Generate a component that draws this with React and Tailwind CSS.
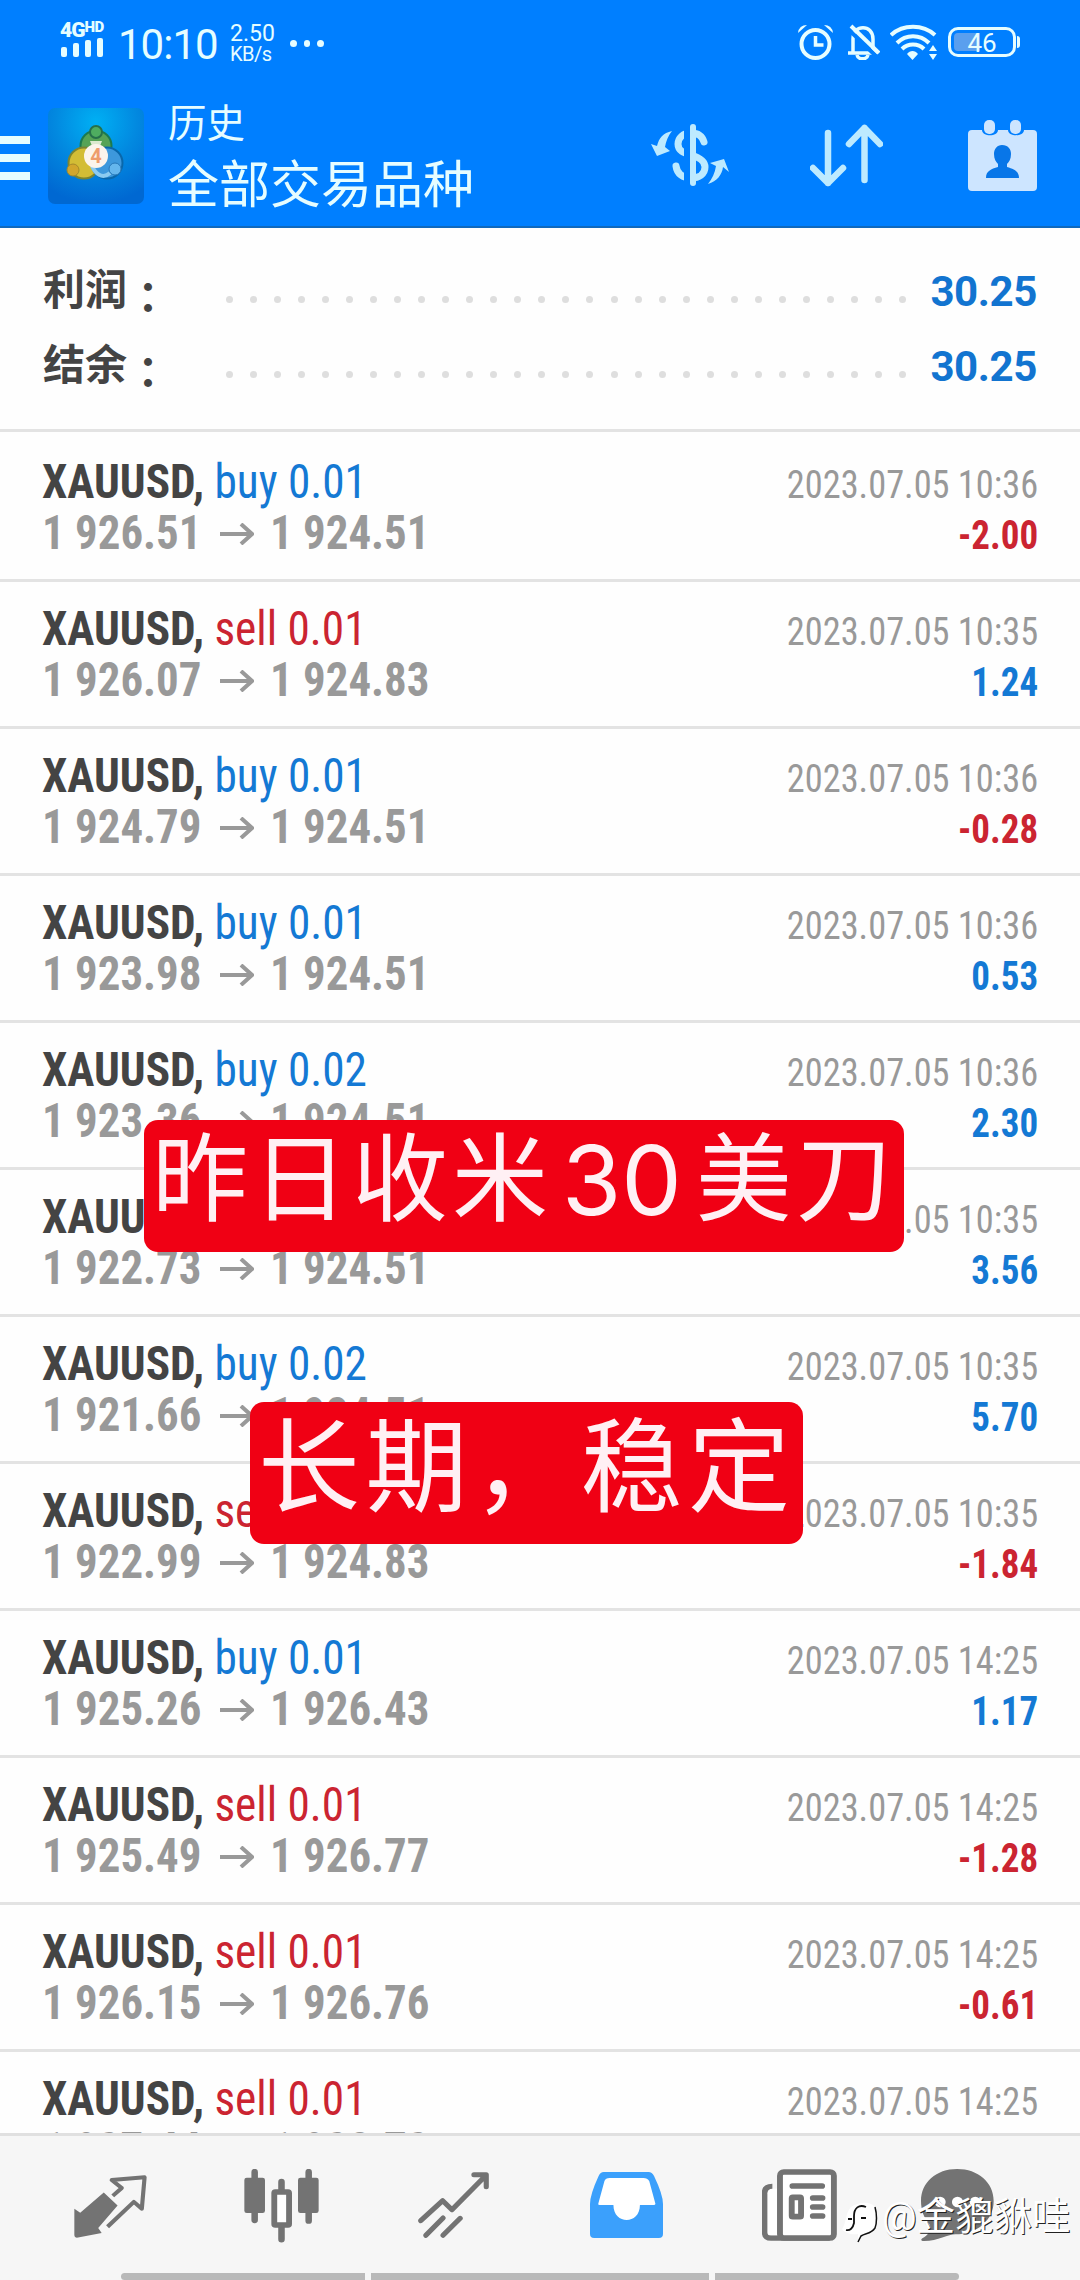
const trades = [
  { side: 'buy', lots: '0.01', open: '1 926.51', close: '1 924.51', time: '2023.07.05 10:36', profit: '-2.00' },
  { side: 'sell', lots: '0.01', open: '1 926.07', close: '1 924.83', time: '2023.07.05 10:35', profit: '1.24' },
  { side: 'buy', lots: '0.01', open: '1 924.79', close: '1 924.51', time: '2023.07.05 10:36', profit: '-0.28' },
  { side: 'buy', lots: '0.01', open: '1 923.98', close: '1 924.51', time: '2023.07.05 10:36', profit: '0.53' },
  { side: 'buy', lots: '0.02', open: '1 923.36', close: '1 924.51', time: '2023.07.05 10:36', profit: '2.30' },
  { side: 'buy', lots: '0.02', open: '1 922.73', close: '1 924.51', time: '2023.07.05 10:35', profit: '3.56' },
  { side: 'buy', lots: '0.02', open: '1 921.66', close: '1 924.51', time: '2023.07.05 10:35', profit: '5.70' },
  { side: 'sell', lots: '0.02', open: '1 922.99', close: '1 924.83', time: '2023.07.05 10:35', profit: '-1.84' },
  { side: 'buy', lots: '0.01', open: '1 925.26', close: '1 926.43', time: '2023.07.05 14:25', profit: '1.17' },
  { side: 'sell', lots: '0.01', open: '1 925.49', close: '1 926.77', time: '2023.07.05 14:25', profit: '-1.28' },
  { side: 'sell', lots: '0.01', open: '1 926.15', close: '1 926.76', time: '2023.07.05 14:25', profit: '-0.61' },
  { side: 'sell', lots: '0.01', open: '1 927.44', close: '1 928.72', time: '2023.07.05 14:25', profit: '-1.28' },
];

function StatusBar() {
  return (
    <div className="flex h-[86px] justify-between pl-[60px] pr-[60px] text-[#e6fdff]">
      <div className="flex">
        <div className="w-[46px] pt-[20px]">
          <div className="flex h-[18px] items-start font-black leading-none">
            <span className="text-[21px] leading-[20px] tracking-[-1px]">4G</span>
            <span className="text-[15px] leading-[14px] tracking-[-0.5px]">HD</span>
          </div>
          <div className="flex h-[19px] items-end gap-[6px] pl-px">
            <i className="h-[10px] w-[6px] rounded-[2px] bg-current" />
            <i className="h-[14px] w-[6px] rounded-[2px] bg-current" />
            <i className="h-[17px] w-[6px] rounded-[2px] bg-current" />
            <i className="h-[19px] w-[6px] rounded-[2px] bg-current" />
          </div>
        </div>
        <span className="ml-[12px] mt-[24px] w-[112px] text-[42px] leading-[42px] tracking-[-1px]">10:10</span>
        <div className="w-[59px] pt-[24px] text-[23px] leading-[20px]">
          <div>2.50</div>
          <div className="text-[20px] tracking-[-0.5px]">KB/s</div>
        </div>
        <div className="flex gap-[7px] pl-px pt-[40px]">
          <i className="size-[6.5px] rounded-full bg-current" />
          <i className="size-[6.5px] rounded-full bg-current" />
          <i className="size-[6.5px] rounded-full bg-current" />
        </div>
      </div>
      <div className="flex pt-[24px]">
        <svg width="36" height="36" viewBox="0 0 36 36" fill="none" stroke="currentColor" strokeWidth="4">
          <circle cx="17.500" cy="20" r="14" />
          <path d="M17.500 12v9h8" strokeWidth="3.500" />
          <path d="M0 9q1-8 9-8zM35 9q-1-8-9-8z" fill="currentColor" stroke="none" />
        </svg>
        <svg className="ml-[14px]" width="32" height="36" viewBox="0 0 32 36" fill="none" stroke="currentColor" strokeWidth="3.500">
          <path d="M5 29V15C5 0 25 0 25 15v14M0 29h29" />
          <path d="M9 31c1 5 10 5 11 0" />
          <path d="M1 1l30 29" stroke="#007fff" strokeWidth="4" transform="translate(-2 3)" />
          <path d="M3 2l28 27" strokeWidth="4" />
        </svg>
        <svg className="ml-[10px]" width="47" height="36" viewBox="0 0 47 36" fill="none" stroke="currentColor" strokeWidth="4">
          <path d="M1 11c12-11 32-11 44 0M7 19c9-9 23-9 32 0M12 25c6-6 16-6 22 0" />
          <path d="M17 30c3-4 8-4 11 0l-5.500 6z" fill="currentColor" stroke="none" />
          <path d="M43 21l4 6h-8zM43 36l4-6h-8z" fill="currentColor" stroke="none" />
        </svg>
        <div className="ml-[11px] mt-[3px] h-[30px] w-[68px] rounded-[10px] border-[3px] border-current p-[3px]">
          <div className="relative h-full rounded-[4px]">
            <i className="block h-full w-[26px] rounded-l-[4px] bg-[#5a9fee]" />
            <span className="absolute inset-0 text-center text-[26px] leading-[20px]">46</span>
          </div>
        </div>
        <i className="ml-px mt-[12px] h-[12px] w-[3px] rounded-r-full bg-current" />
      </div>
    </div>
  );
}

function AppLogo() {
  return (
    <svg className="ml-[18px] mt-[22px]" width="96" height="96" viewBox="0 0 96 96">
      <defs>
        <radialGradient id="tile" cx="50%" cy="15%" r="85%">
          <stop offset="0" stopColor="#00b0f4" />
          <stop offset=".5" stopColor="#0289e0" />
          <stop offset="1" stopColor="#0068d2" />
        </radialGradient>
      </defs>
      <rect width="96" height="96" rx="7" fill="url(#tile)" />
      <g strokeWidth="2">
        <circle cx="48" cy="38" r="15.500" fill="#56a356" stroke="#1c7a50" />
        <circle cx="36" cy="55" r="15.500" fill="#d3bd35" stroke="#7b8430" />
        <circle cx="59" cy="55" r="15.500" fill="#3d98dc" stroke="#0967aa" />
        <path d="M62 65c-8 7-15 0-18-7" fill="none" stroke="#8ccbf0" strokeWidth="4" />
        <circle cx="48" cy="24" r="6" fill="#4eac60" stroke="#26704a" />
        <circle cx="25" cy="62" r="6" fill="#d2a62c" stroke="#a5892a" strokeWidth="1" />
        <circle cx="67" cy="61" r="6" fill="#65b6ed" stroke="#2878b8" strokeWidth="1" />
      </g>
      <path d="M42 33h12l-2 5h-8z" fill="#dbe9cf" />
      <circle cx="48" cy="48" r="12" fill="#fbf4ec" />
      <text x="48" y="55" textAnchor="middle" fontSize="20" fontWeight="700" fill="#ee9c6c" fontFamily="Roboto, sans-serif">4</text>
    </svg>
  );
}

function Header() {
  return (
    <header className="h-[228px] border-b-2 border-[#1069bd] bg-[#007fff]">
      <StatusBar />
      <div className="flex">
        <div className="flex w-[30px] flex-col gap-[10px] pt-[50px]">
          <i className="h-[8px] bg-[#e6fdff]" />
          <i className="h-[8px] bg-[#e6fdff]" />
          <i className="h-[8px] bg-[#e6fdff]" />
        </div>
        <AppLogo />
        <div className="ml-[24px] w-[483px] pt-[16px] text-[#e6fdff]">
          <div className="text-[38.5px] leading-[44px]">历史</div>
          <div className="text-[51px] leading-[80px]">全部交易品种</div>
        </div>
        <svg className="mt-[38px]" width="78" height="62" viewBox="0 0 78 62" fill="none" stroke="#bdeaff">
          <path d="M53 18c-2-7-8-9-13-9-8 0-13 5-13 11 0 7 6 9 13 11s14 5 14 12-6 11-14 11-14-4-15-12" strokeWidth="7" strokeLinecap="round" />
          <path d="M36 2v60" stroke="#007fff" strokeWidth="6" />
          <path d="M42 3v56" strokeWidth="6" strokeLinecap="round" />
          <path d="M21 7C12 9 8 14 6 22l-6-2 6 12 13-5-5-4c1-6 3-11 7-16zM57 60c9-3 14-9 15-17l6 5-5-13-14 4 6 3c-1 7-4 13-8 18z" fill="#bdeaff" stroke="none" />
        </svg>
        <svg className="ml-[81px] mt-[38px]" width="73" height="63" viewBox="0 0 73 63" fill="none" stroke="#bdeaff" strokeWidth="6.500" strokeLinecap="round" strokeLinejoin="round">
          <path d="M18 9v50M3 44l15 15 15-15M54.500 56V4M39 20L54.500 4 70 20" />
        </svg>
        <svg className="ml-[85px] mt-[34px]" width="69" height="71" viewBox="0 0 69 71">
          <rect y="10" width="69" height="61" rx="4" fill="#cde5ff" />
          <path d="M14 8h16v2c0 7-16 7-16 0zM40 8h16v2c0 7-16 7-16 0z" fill="#007fff" />
          <rect x="16" width="11" height="14" rx="5" fill="#cde5ff" />
          <rect x="42" width="11" height="14" rx="5" fill="#cde5ff" />
          <path d="M34 25c6 0 9 4 9 9 0 5-2 8-4 10v3c7 2 12 4 12 11H18c0-7 5-9 12-11v-3c-2-2-4-5-4-10 0-5 3-9 8-9z" fill="#0876e8" />
        </svg>
      </div>
    </header>
  );
}

function SummaryLine({ label, value }) {
  return (
    <div className="flex h-[75px] items-center pl-[43px] pr-[43px]">
      <span className="flex w-[183px] pt-[4px] text-[42px] font-bold leading-none text-[#444]">
        {label}
        <span className="pt-[4px] font-['Noto_Sans_CJK_TC',sans-serif]">：</span>
      </span>
      <span className="mt-[18px] flex w-[680px] justify-between">
        {Array.from({ length: 29 }, (_, i) => (
          <i key={i} className="size-[7px] rounded-full bg-[#dedede]" />
        ))}
      </span>
      <span className="ml-auto pt-[2px] text-[42px] font-bold leading-none tracking-[-0.4px] text-[#1274d0]">{value}</span>
    </div>
  );
}

function TradeRow({ trade }) {
  const sideColor = trade.side === 'buy' ? 'text-[#1479d4]' : 'text-[#cb2431]';
  const profitColor = trade.profit.startsWith('-') ? 'text-[#cb2431]' : 'text-[#1479d4]';

  return (
    <div className="flex h-[147px] shrink-0 justify-between border-b-3 border-[#e3e3e3] px-[42px] pt-[21px] [font-stretch:75%] first:h-[150px] first:pt-[24px]">
      <div>
        <div className="h-[51px] origin-left scale-x-[0.943] whitespace-nowrap text-[48px] leading-[51px]">
          <span className="font-bold text-[#444]">{'XAUUSD, '}</span>
          <span className={sideColor}>{trade.side} {trade.lots}</span>
        </div>
        <div className="flex h-[51px] items-center whitespace-nowrap text-[48px] font-bold leading-[51px] text-[#999]">
          <span className="w-[178px] origin-left scale-x-[0.935]">{trade.open}</span>
          <svg className="mt-[3px]" width="34" height="22" viewBox="0 0 34 22" fill="none" stroke="currentColor" strokeWidth="4">
            <path d="M0 11h32M21 1l11 10-11 10" />
          </svg>
          <span className="ml-[16px] origin-left scale-x-[0.935]">{trade.close}</span>
        </div>
      </div>
      <div className="pt-px text-right">
        <div className="h-[51px] origin-right scale-x-[0.92] whitespace-nowrap text-[39.5px] leading-[56px] text-[#999]">{trade.time}</div>
        <div className={`origin-right scale-x-[0.925] text-[40px] font-bold leading-[56px] ${profitColor}`}>{trade.profit}</div>
      </div>
    </div>
  );
}

function TabBar() {
  return (
    <nav className="flex h-[147px] flex-col justify-between border-t-3 border-[#e0e0e0] bg-[#f6f6f6]">
      <div className="flex items-start pl-[74px] pt-px text-[#737373]">
        <svg className="mt-[38px]" width="73" height="63" viewBox="215 405 211 190" preserveAspectRatio="none" fill="none" stroke="currentColor" strokeWidth="12">
          <path d="M301 458l40 39-56 68 10 15-72 14q-7 0-7-7v-80l17 12z" fill="currentColor" stroke="none" />
          <path d="M327 468l26-24-29-24 95-8-8 95-23-21-76 75" strokeLinejoin="round" />
        </svg>
        <svg className="ml-[97px] mt-[32px]" width="75" height="74" viewBox="708 387 218 222" preserveAspectRatio="none" fill="none" stroke="currentColor" strokeWidth="19" strokeLinecap="round">
          <path d="M739 396v144M896 396v146M817 426v30M817 560v38" />
          <rect x="709" y="413" width="60" height="106" rx="7" fill="currentColor" stroke="none" />
          <rect x="865" y="413" width="60" height="106" rx="7" fill="currentColor" stroke="none" />
          <rect x="796" y="456" width="43" height="99" rx="3" fill="#fff" strokeWidth="17" />
        </svg>
        <svg className="ml-[99px] mt-[35px]" width="71" height="66" viewBox="1213 396 207 198" preserveAspectRatio="none" fill="none" stroke="currentColor" strokeWidth="15" strokeLinecap="round" strokeLinejoin="round">
          <path d="M1221 542l64-60 27 27 98-102M1376 404h36v36M1286 534l-50 52M1336 535l-50 51" />
        </svg>
        <svg className="ml-[101px] mt-[35px]" width="73" height="66" viewBox="145 396 212 198" preserveAspectRatio="none">
          <path d="M185 396h130q10 0 16 12 26 56 26 84v90q0 12-12 12H157q-12 0-12-12v-90q0-28 25-84 5-12 15-12z" fill="#3ba0fc" />
          <path d="M202 414h98q12 0 17 9l18 68q0 4-5 4h-40c0 60-77 60-77 0h-40q-5 0-4-4l18-68q3-9 15-9z" fill="#fff" />
        </svg>
        <svg className="ml-[99px] mt-[32px]" width="75" height="72" viewBox="647 387 217 216" preserveAspectRatio="none" fill="none" stroke="currentColor" strokeWidth="17">
          <path d="M677 440q-22 0-22 18v118q0 18 18 18h170" />
          <path d="M677 446h18v140h-24q-8 0-8-8V460q0-14 14-14z" fill="#fff" stroke="none" />
          <rect x="699" y="396" width="156" height="198" rx="11" fill="#fff" />
          <path d="M735 438h86M794 474h28M794 501h28M794 528h28" strokeLinecap="round" />
          <rect x="733" y="472" width="27" height="58" rx="3" />
        </svg>
        <svg className="ml-[84px] mt-[32px]" width="73" height="72" viewBox="1109 387 210 216" preserveAspectRatio="none">
          <path d="M1213 387c60 0 105 40 105 96 0 60-50 100-110 100-20 0-50 20-90 20-10 0-10-5-5-8 20-12 28-30 20-43-15-17-24-40-24-69 0-56 44-96 104-96z" fill="currentColor" />
          <circle cx="1164" cy="486" r="16" fill="#fff" />
          <circle cx="1214" cy="486" r="16" fill="#fff" />
          <circle cx="1265" cy="486" r="16" fill="#fff" />
        </svg>
      </div>
      <div className="flex justify-center gap-[6px]">
        <i className="h-[7px] w-[244px] rounded-l-[4px] bg-[#b9b9b9]" />
        <i className="h-[7px] w-[338px] bg-[#b9b9b9]" />
        <i className="h-[7px] w-[244px] rounded-r-[4px] bg-[#b9b9b9]" />
      </div>
    </nav>
  );
}

function Watermark() {
  return (
    <div className="absolute left-[842px] top-[2194px] flex text-white">
      <svg className="mt-[8px]" width="36" height="42" viewBox="0 0 36 42">
        <path d="M0 27C5 22 3 5 13 3c6-3 13-3 18 0 4 4 4 19 2 24-3 5-8 5-14 7l-3 6v-8c-7 1-13-1-16-5z" fill="#fff" />
        <path d="M33 5c2 7 2 16 0 21-4 6-9 5-14 8l-3 6" fill="none" stroke="#111" strokeWidth="1.500" />
        <path d="M24 5c-7-3-12 1-12 9v7c-1 5-4 8-8 7" fill="none" stroke="#111" strokeWidth="1.800" />
        <path d="M6 17h4M19 16h5" stroke="#111" strokeWidth="1.800" />
      </svg>
      <span className="ml-[4px] whitespace-nowrap text-[38.5px] leading-[46px] [text-shadow:1px_1px_0_#222]">@金貔貅哇</span>
    </div>
  );
}

export default function App() {
  return (
    <div className="relative flex h-[2280px] w-[1080px] flex-col overflow-hidden bg-[#fefefe] font-[Roboto,'Noto_Sans_CJK_SC',sans-serif]">
      <Header />
      <section className="h-[204px] border-b-3 border-[#e3e3e3] pt-[25px]">
        <SummaryLine label="利润" value="30.25" />
        <SummaryLine label="结余" value="30.25" />
      </section>
      <main className="flex min-h-0 flex-1 flex-col overflow-hidden">
        {trades.map((trade, index) => (
          <TradeRow key={index} trade={trade} />
        ))}
      </main>
      <TabBar />
      <Watermark />

      {/* promo stickers over the list */}
      <div className="absolute left-[144px] top-[1120px] flex h-[132px] w-[760px] rounded-[14px] bg-[#f00014] pl-[8px] text-[96px] leading-[120px] tracking-[4px] text-[#fff0f4]">
        <span>昨日收米</span>
        <span className="ml-[10px] mr-[14px] font-[Inter] tracking-[0px]">30</span>
        <span>美刀</span>
      </div>
      <div className="absolute left-[250px] top-[1402px] h-[142px] w-[553px] whitespace-nowrap rounded-[14px] bg-[#f00014] pl-[8px] text-[102px] leading-[135px] tracking-[5.5px] text-[#fff0f4]">
        长期，稳定
      </div>
    </div>
  );
}
